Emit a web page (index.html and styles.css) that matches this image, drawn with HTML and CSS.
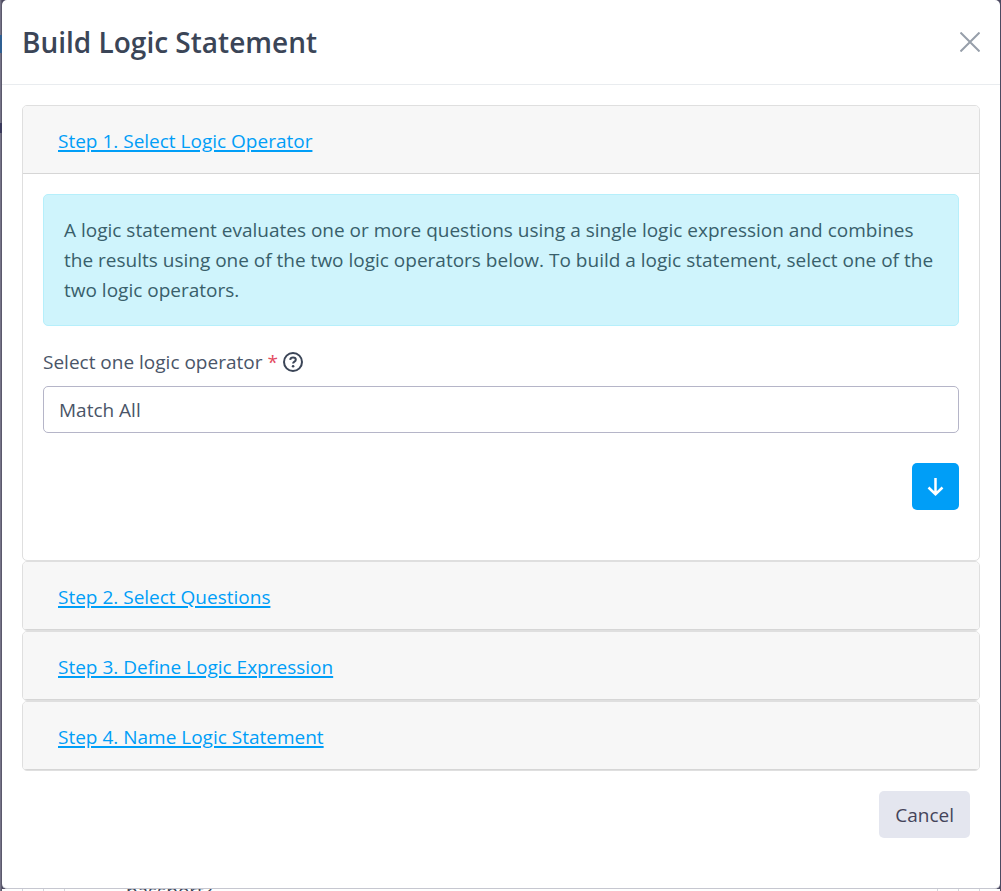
FILE: index.html
```html
<!DOCTYPE html>
<html lang="en">
<head>
<meta charset="utf-8">
<meta name="viewport" content="width=device-width, initial-scale=1">
<title>Build Logic Statement</title>
<link rel="stylesheet" href="styles.css">
</head>
<body>
<div class="backdrop">
  <main class="modal" role="dialog" aria-labelledby="modal-title">
    <header class="modal-header">
      <h1 class="modal-title" id="modal-title">Build Logic Statement</h1>
      <button class="close" type="button" aria-label="Close">
        <svg viewBox="0 0 20 20" width="20" height="20" aria-hidden="true"><path d="M0.5 0.5 19.5 19.5M19.5 0.5 0.5 19.5"/></svg>
      </button>
    </header>
    <div class="modal-body">
      <section class="card">
        <h2 class="card-header"><a class="step-link" href="#step1">Step 1. Select Logic Operator</a></h2>
        <div class="card-body" id="step1">
          <p class="alert">A logic statement evaluates one or more questions using a single logic expression and combines the results using one of the two logic operators below. To build a logic statement, select one of the two logic operators.</p>
          <div class="field-label">
            <label for="operator">Select one logic operator <span class="required">*</span></label>
            <svg class="help" viewBox="0 0 20 20" width="20" height="20" role="img" aria-label="Help"><circle cx="10" cy="10" r="9"/><path d="M7.2 7.8C7.4 6.2 8.5 5.5 10 5.5c1.600 0 2.800.9 2.800 2.300 0 1.900-2.700 1.800-2.700 3.700"/><circle class="dot" cx="10.100" cy="14.200" r="1.300"/></svg>
          </div>
          <select class="select" id="operator"><option>Match All</option><option>Match Any</option></select>
          <div class="next-row">
            <button class="next" type="button" aria-label="Next step">
              <svg viewBox="0 0 17 19" width="17" height="19" aria-hidden="true"><path d="M8.500 1v16M1.500 10.500 8.500 17.200 15.500 10.500"/></svg>
            </button>
          </div>
        </div>
      </section>
      <section class="card"><h2 class="card-header"><a class="step-link" href="#step2">Step 2. Select Questions</a></h2></section>
      <section class="card"><h2 class="card-header"><a class="step-link" href="#step3">Step 3. Define Logic Expression</a></h2></section>
      <section class="card"><h2 class="card-header"><a class="step-link" href="#step4">Step 4. Name Logic Statement</a></h2></section>
      <div class="actions"><button class="cancel" type="button">Cancel</button></div>
    </div>
  </main>
  <div class="underlay"><span class="rule"></span><span class="rule"></span><span class="rule"></span><span class="underlay-text">passport?</span><span class="rule"></span><span class="rule"></span><span class="rule"></span></div>
</div>
</body>
</html>
```
FILE: styles.css
```css
* { box-sizing: border-box; }
body {
  margin: 0;
  background: #757387;
  color: #4a5568;
  font-family: "Segoe UI", "Open Sans", "Noto Sans", sans-serif;
  font-size: 19px;
  line-height: 30px;
}
.backdrop {
  display: flex;
  flex-direction: column;
  height: 100vh;
  overflow: hidden;
  padding: 0 1px 0 2px;
  background:
    linear-gradient(#2f5f92, #2f5f92) 0 35px / 2px 18px no-repeat,
    linear-gradient(#3a3a5c, #3a3a5c) 0 123px / 2px 10px no-repeat,
    linear-gradient(to right, #757387 1px, #5b596c 1px 2px, #4c4a61 2px);
}
.modal {
  flex: 1;
  background: #fff;
  border-bottom: 1px solid #c6c7d0;
  border-radius: 5px;
}
.modal-header {
  display: flex;
  align-items: center;
  justify-content: space-between;
  padding: 22px 20px;
  border-bottom: 1px solid #e9ecef;
}
.modal-title {
  margin: 0;
  color: #3b4557;
  font-size: 28px;
  font-weight: 600;
  line-height: 40px;
}
.close {
  display: flex;
  padding: 0;
  border: 0;
  background: none;
}
.close svg { fill: none; stroke: #979faa; stroke-width: 2; }
.modal-body { padding: 20px; }
.card {
  border: 1px solid #dfdfdf;
  border-radius: 5px;
  overflow: hidden;
}
.card-header {
  margin: 0;
  padding: 20px 35px 17px;
  background: #f7f7f7;
  border-bottom: 1px solid #d6d6d6;
  font-size: inherit;
  font-weight: 400;
}
.step-link {
  color: #009ef7;
  text-decoration: underline;
  text-decoration-thickness: 2px;
  text-underline-offset: 2px;
}
.card-body { padding: 20px 20px 50px; }
.alert {
  margin: 0;
  padding: 20px;
  background: #cff4fc;
  border: 1px solid #b6effb;
  border-radius: 5px;
  color: #395f6b;
}
.field-label {
  display: flex;
  align-items: center;
  gap: 5px;
  margin: 21px 0 9px;
}
.required { color: #e34b60; }
.help { fill: none; stroke: #3b4557; stroke-width: 2; }
.help .dot { fill: #3b4557; stroke: none; }
.select {
  display: block;
  width: 100%;
  height: 47px;
  padding: 0 15px;
  appearance: none;
  background: #fff;
  border: 1px solid #b5b5c8;
  border-radius: 5px;
  color: #4a5568;
  font: inherit;
}
.next-row {
  display: flex;
  justify-content: flex-end;
  margin-top: 30px;
}
.next {
  display: grid;
  place-items: center;
  width: 47px;
  height: 47px;
  padding: 0;
  border: 0;
  border-radius: 5px;
  background: #009ef7;
}
.next svg { fill: none; stroke: #fff; stroke-width: 2.500; }
.actions {
  display: flex;
  justify-content: flex-end;
  padding: 20px 10px;
}
.cancel {
  height: 47px;
  padding: 0 16px;
  border: 0;
  border-radius: 5px;
  background: #e4e6ef;
  color: #44445a;
  font: inherit;
}
.underlay {
  display: flex;
  gap: 20px;
  height: 2px;
  padding: 0 20px;
  overflow: hidden;
  background: #fff;
}
.rule { width: 1px; height: 2px; background: #d5d6dd; }
.underlay-text {
  flex: 1;
  padding-left: 41px;
  color: #3b4557;
  line-height: 4px;
}
```
